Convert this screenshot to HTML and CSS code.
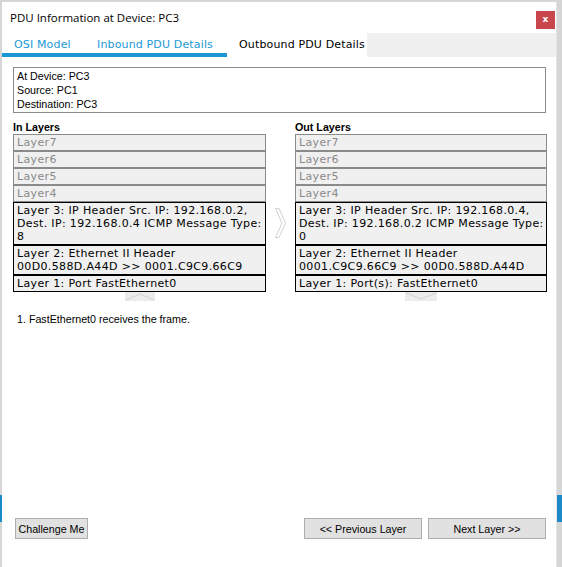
FILE: index.html
```html
<!DOCTYPE html>
<html>
<head>
<meta charset="utf-8">
<link rel="stylesheet" href="styles.css">
</head>
<body>
<div class="window">
  <div class="titlebar">
    <span class="title">PDU Information at Device: PC3</span>
    <span class="close">x</span>
  </div>
  <div class="tabs">
    <div class="tab tab-osi">OSI Model</div>
    <div class="tab tab-in">Inbound PDU Details</div>
    <div class="tab tab-out active">Outbound PDU Details</div>
    <div class="tab-fill"></div>
  </div>
  <div class="content">
    <div class="infobox">
      <div>At Device: PC3</div>
      <div>Source: PC1</div>
      <div>Destination: PC3</div>
    </div>
    <div class="columns">
      <div class="col">
        <div class="col-head">In Layers</div>
        <div class="layer off">Layer7</div>
        <div class="layer off">Layer6</div>
        <div class="layer off">Layer5</div>
        <div class="layer off">Layer4</div>
        <div class="layer on">Layer 3: IP Header Src. IP: 192.168.0.2, Dest. IP: 192.168.0.4 ICMP Message Type: 8</div>
        <div class="layer on">Layer 2: Ethernet II Header 00D0.588D.A44D &gt;&gt; 0001.C9C9.66C9</div>
        <div class="layer on">Layer 1: Port FastEthernet0</div>
        <svg class="chev" width="30" height="9" viewBox="0 0 30 9"><rect x="0" y="0" width="30" height="9" fill="#ececec"/><polyline points="1,8 15,2 29,8" fill="none" stroke="#d2d2d2" stroke-width="1"/></svg>
      </div>
      <div class="mid">
        <svg class="arrow" width="11" height="30" viewBox="0 0 11 30"><polygon points="0.5,0.5 4,0.5 10.5,15 4,29.5 0.5,29.5 7,15" fill="#ffffff" stroke="#d0d0d0" stroke-width="1"/></svg>
      </div>
      <div class="col">
        <div class="col-head">Out Layers</div>
        <div class="layer off">Layer7</div>
        <div class="layer off">Layer6</div>
        <div class="layer off">Layer5</div>
        <div class="layer off">Layer4</div>
        <div class="layer on">Layer 3: IP Header Src. IP: 192.168.0.4, Dest. IP: 192.168.0.2 ICMP Message Type: 0</div>
        <div class="layer on">Layer 2: Ethernet II Header 0001.C9C9.66C9 &gt;&gt; 00D0.588D.A44D</div>
        <div class="layer on">Layer 1: Port(s): FastEthernet0</div>
        <svg class="chev" width="32" height="9" viewBox="0 0 32 9"><rect x="0" y="0" width="32" height="9" fill="#ececec"/><polyline points="1,1 16,7 31,1" fill="none" stroke="#d2d2d2" stroke-width="1"/></svg>
      </div>
    </div>
    <div class="step">1. FastEthernet0 receives the frame.</div>
  </div>
  <div class="footer">
    <button class="btn btn-challenge">Challenge Me</button>
    <div class="spacer"></div>
    <button class="btn btn-nav">&lt;&lt; Previous Layer</button>
    <button class="btn btn-nav">Next Layer &gt;&gt;</button>
  </div>
</div>
</body>
</html>
```
FILE: styles.css
```css
html, body {
  margin: 0;
  padding: 0;
}
body {
  width: 562px;
  height: 567px;
  overflow: hidden;
  background:
    linear-gradient(to bottom, transparent 0, transparent 495px, #1c8ac6 495px, #1c8ac6 522px, transparent 522px),
    #d6d6d6;
  font-family: "Liberation Sans", Arial, sans-serif;
}
.window {
  margin: 2px 0 0 2px;
  width: 555px;
  height: 565px;
  background: #ffffff;
  display: flex;
  flex-direction: column;
  box-sizing: border-box;
  border-right: 1px solid #e4e4e4;
}
.titlebar {
  height: 31px;
  display: flex;
  align-items: flex-start;
  justify-content: space-between;
  padding-left: 8px;
  box-sizing: border-box;
}
.title {
  font-family: "Open Sans", "Noto Sans", sans-serif;
  font-size: 11.5px;
  line-height: 16px;
  margin-top: 8px;
  color: #000;
}
.close {
  width: 19px;
  height: 18px;
  margin-top: 9px;
  margin-right: 1px;
  background: #c9474c;
  color: #fff;
  font-family: "DejaVu Sans", sans-serif;
  font-size: 9px;
  font-weight: bold;
  line-height: 17px;
  text-align: center;
}
.tabs {
  display: flex;
  height: 24px;
  font-family: "DejaVu Sans", Verdana, sans-serif;
  font-size: 11px;
  letter-spacing: 0.15px;
}
.tab {
  box-sizing: border-box;
  padding: 5px 0 0 12px;
  line-height: 14px;
  color: #1b9ad4;
  border-bottom: 4px solid #1b98d3;
}
.tab-osi { width: 83px; }
.tab-in { width: 142px; }
.tab-out { width: 140px; }
.tab.active {
  color: #000;
  border-bottom: none;
  background: #fff;
}
.tab-fill {
  flex: 1;
  background: #f0f0f0;
}
.content {
  padding: 10px 10px 0 11px;
}
.infobox {
  border: 1px solid #8a8a8a;
  padding: 1px 3px;
  font-size: 10.7px;
  line-height: 14px;
  color: #000;
}
.columns {
  display: grid;
  grid-template-columns: 253px 29px 252px;
  margin-top: 7px;
}
.col {
  display: flex;
  flex-direction: column;
}
.col-head {
  font-weight: bold;
  font-size: 10.7px;
  line-height: 14px;
  color: #000;
}
.layer {
  box-sizing: border-box;
  border: 1px solid #8a8a8a;
  background: #f0f0f0;
  padding: 1px 0 1px 3px;
  font-family: "DejaVu Sans", Verdana, sans-serif;
  font-size: 11px;
  letter-spacing: 0.35px;
  line-height: 13px;
}
.layer.off {
  color: #8a8a8a;
}
.layer.on {
  color: #000;
  border-color: #000;
}
.chev {
  display: block;
  align-self: center;
  margin-top: 0;
}
.mid {
  display: flex;
  justify-content: center;
}
.arrow {
  display: block;
  margin-top: 88px;
}
.step {
  font-size: 10.7px;
  line-height: 14px;
  margin-top: 11px;
  margin-left: 4px;
  color: #000;
}
.footer {
  margin-top: auto;
  display: flex;
  padding: 0 10px 28px 13px;
}
.spacer {
  flex: 1;
}
.btn {
  height: 21px;
  box-sizing: border-box;
  border: 1px solid #adadad;
  background: #e1e1e1;
  font-family: "Liberation Sans", Arial, sans-serif;
  font-size: 10.7px;
  color: #000;
  padding: 0;
}
.btn-challenge {
  width: 73px;
}
.btn-nav {
  width: 118px;
  margin-left: 6px;
}
```
